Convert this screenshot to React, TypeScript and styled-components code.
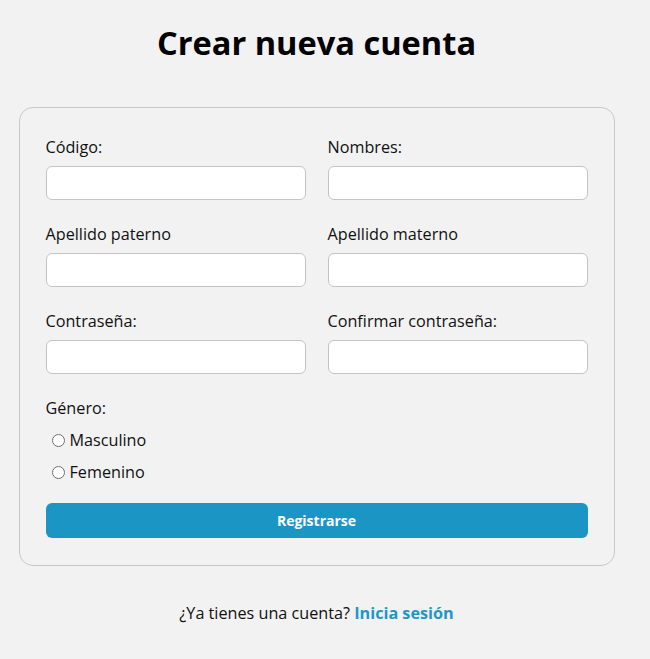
import React from "react";
import styled, { createGlobalStyle } from "styled-components";

const Global = createGlobalStyle`
  html, body { margin: 0; padding: 0; background: #f2f2f2; }
  body { font-family: "Open Sans", "Noto Sans", sans-serif; color: #111; }
  * { box-sizing: border-box; }
`;

const Page = styled.div`
  width: 633px;
  display: flex;
  flex-direction: column;
  align-items: center;
`;

const Title = styled.h1`
  margin: 21px 0 0;
  font-size: 32.6px;
  line-height: 43px;
  font-weight: 700;
  color: #000;
`;

const Card = styled.form`
  margin-top: 43px;
  width: 596px;
  border: 1px solid #c8c8c8;
  border-radius: 14px;
  padding: 29px 26px 27px;
  display: flex;
  flex-direction: column;
`;

const Grid = styled.div`
  display: grid;
  grid-template-columns: 1fr 1fr;
  column-gap: 22px;
  row-gap: 24px;
`;

const Field = styled.div`
  display: flex;
  flex-direction: column;
`;

const Label = styled.label`
  font-size: 16.2px;
  line-height: 21px;
  margin-bottom: 8px;
`;

const Input = styled.input`
  height: 34px;
  width: 100%;
  border: 1px solid #c4c4c4;
  border-radius: 6px;
  background: #fff;
  font: inherit;
  padding: 0 8px;
  outline: none;
`;

const GenderBlock = styled.div`
  margin-top: 24px;
  display: flex;
  flex-direction: column;
`;

const GenderLabel = styled.span`
  font-size: 16.2px;
  line-height: 21px;
  margin-bottom: 5px;
`;

const RadioRow = styled.label`
  display: flex;
  align-items: center;
  height: 32px;
  font-size: 16.2px;
  padding-left: 6px;
  gap: 5px;
`;

const Radio = styled.input`
  appearance: none;
  margin: 0;
  width: 13px;
  height: 13px;
  border: 1px solid #707070;
  border-radius: 50%;
  background: #fff;
`;

const Button = styled.button`
  margin-top: 15px;
  height: 35px;
  width: 100%;
  border: none;
  border-radius: 6px;
  background: #1b96c4;
  color: #fff;
  font-family: inherit;
  font-size: 14px;
  font-weight: 700;
`;

const Footer = styled.p`
  margin: 37px 0 0;
  font-size: 16.2px;
  line-height: 21px;
`;

const Link = styled.a`
  color: #1f97c6;
  font-weight: 700;
  text-decoration: none;
`;

const fields = [
  ["Código:", "Nombres:"],
  ["Apellido paterno", "Apellido materno"],
  ["Contraseña:", "Confirmar contraseña:"],
];

export default function App() {
  return (
    <>
      <Global />
      <Page>
        <Title>Crear nueva cuenta</Title>
        <Card onSubmit={(e) => e.preventDefault()}>
          <Grid>
            {fields.flat().map((f) => (
              <Field key={f}>
                <Label>{f}</Label>
                <Input type={f.startsWith("Con") ? "password" : "text"} />
              </Field>
            ))}
          </Grid>
          <GenderBlock>
            <GenderLabel>Género:</GenderLabel>
            <RadioRow>
              <Radio type="radio" name="genero" />
              Masculino
            </RadioRow>
            <RadioRow>
              <Radio type="radio" name="genero" />
              Femenino
            </RadioRow>
          </GenderBlock>
          <Button type="submit">Registrarse</Button>
        </Card>
        <Footer>
          ¿Ya tienes una cuenta? <Link href="#">Inicia sesión</Link>
        </Footer>
      </Page>
    </>
  );
}
